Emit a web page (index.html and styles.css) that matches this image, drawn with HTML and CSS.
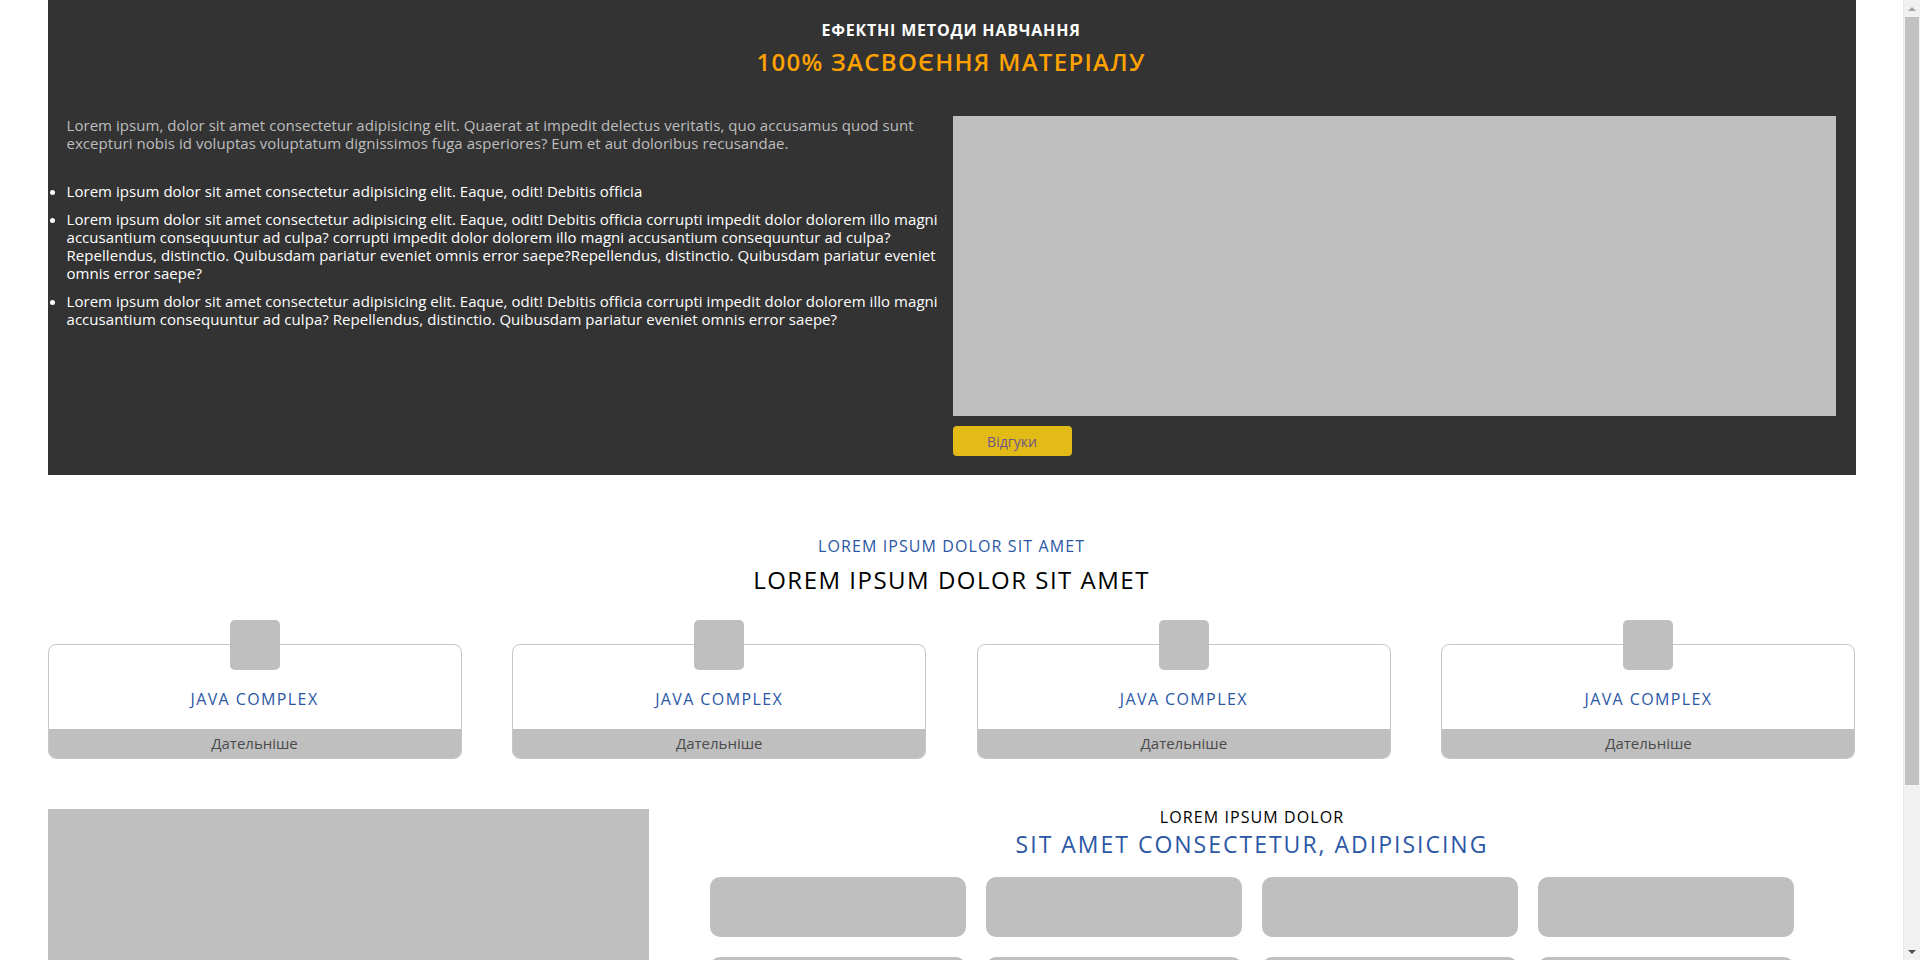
FILE: index.html
```html
<!DOCTYPE html>
<html lang="uk">
<head>
<meta charset="utf-8">
<title>Ефектні методи навчання</title>
<link rel="stylesheet" href="styles.css">
</head>
<body>
<div class="page">
  <section class="hero">
    <h2 class="hero-kicker">ЕФЕКТНІ МЕТОДИ НАВЧАННЯ</h2>
    <h1 class="hero-title">100% ЗАСВОЄННЯ МАТЕРІАЛУ</h1>
    <div class="hero-body">
      <div class="hero-text">
        <p class="hero-lead">Lorem ipsum, dolor sit amet consectetur adipisicing elit. Quaerat at impedit delectus veritatis, quo accusamus quod sunt excepturi nobis id voluptas voluptatum dignissimos fuga asperiores? Eum et aut doloribus recusandae.</p>
        <ul class="hero-list">
          <li>Lorem ipsum dolor sit amet consectetur adipisicing elit. Eaque, odit! Debitis officia</li>
          <li>Lorem ipsum dolor sit amet consectetur adipisicing elit. Eaque, odit! Debitis officia corrupti impedit dolor dolorem illo magni accusantium consequuntur ad culpa? corrupti impedit dolor dolorem illo magni accusantium consequuntur ad culpa? Repellendus, distinctio. Quibusdam pariatur eveniet omnis error saepe?Repellendus, distinctio. Quibusdam pariatur eveniet omnis error saepe?</li>
          <li>Lorem ipsum dolor sit amet consectetur adipisicing elit. Eaque, odit! Debitis officia corrupti impedit dolor dolorem illo magni accusantium consequuntur ad culpa? Repellendus, distinctio. Quibusdam pariatur eveniet omnis error saepe?</li>
        </ul>
      </div>
      <div class="hero-media">
        <div class="video"></div>
        <button class="btn-reviews" type="button">Відгуки</button>
      </div>
    </div>
  </section>

  <section class="courses">
    <h3 class="courses-kicker">LOREM IPSUM DOLOR SIT AMET</h3>
    <h2 class="courses-title">LOREM IPSUM DOLOR SIT AMET</h2>
    <div class="course-grid">
      <div class="course-card">
        <div class="course-icon"></div>
        <div class="course-name">JAVA COMPLEX</div>
        <div class="course-more">Дательніше</div>
      </div>
      <div class="course-card">
        <div class="course-icon"></div>
        <div class="course-name">JAVA COMPLEX</div>
        <div class="course-more">Дательніше</div>
      </div>
      <div class="course-card">
        <div class="course-icon"></div>
        <div class="course-name">JAVA COMPLEX</div>
        <div class="course-more">Дательніше</div>
      </div>
      <div class="course-card">
        <div class="course-icon"></div>
        <div class="course-name">JAVA COMPLEX</div>
        <div class="course-more">Дательніше</div>
      </div>
    </div>
  </section>

  <section class="features">
    <div class="features-media"></div>
    <div class="features-content">
      <h3 class="features-kicker">LOREM IPSUM DOLOR</h3>
      <h2 class="features-title">SIT AMET CONSECTETUR, ADIPISICING</h2>
      <div class="tile-grid">
        <div class="tile"></div>
        <div class="tile"></div>
        <div class="tile"></div>
        <div class="tile"></div>
        <div class="tile"></div>
        <div class="tile"></div>
        <div class="tile"></div>
        <div class="tile"></div>
      </div>
    </div>
  </section>
</div>
<div class="scrollbar" aria-hidden="true">
  <div class="sb-arrow sb-up"></div>
  <div class="sb-track"><div class="sb-thumb"></div></div>
  <div class="sb-arrow sb-down"></div>
</div>
</body>
</html>
```
FILE: styles.css
```css
* { box-sizing: border-box; }
html, body { margin: 0; padding: 0; }
body {
  font-family: "Open Sans", "Liberation Sans", sans-serif;
  background: #fff;
  color: #000;
  padding-right: 17px;
}
.page {
  width: 1808px;
  margin: 0 auto;
}

/* HERO */
.hero {
  background: #333333;
  padding: 20px 20px 19px 19px;
}
.hero-kicker {
  margin: 0;
  text-align: center;
  color: #fff;
  font-size: 16px;
  line-height: 20px;
  font-weight: 700;
  letter-spacing: 0.8px;
}
.hero-title {
  margin: 7px 0 39px;
  text-align: center;
  color: #ffa200;
  font-size: 24px;
  line-height: 30px;
  font-weight: 600;
  letter-spacing: 1.3px;
}
.hero-body {
  display: grid;
  grid-template-columns: 1fr 883px;
  column-gap: 8px;
}
.hero-text {
  font-size: 15px;
  line-height: 18px;
  letter-spacing: 0.05px;
}
.hero-lead {
  margin: 0 0 30px;
  color: #bdbdbd;
  padding-right: 24px;
}
.hero-list {
  margin: 0;
  padding: 0;
  color: #fff;
}
.hero-list li { margin-bottom: 10px; }
.hero-list li:last-child { margin-bottom: 0; }
.video {
  height: 300px;
  background: #bfbfbf;
}
.btn-reviews {
  display: block;
  margin-top: 10px;
  width: 119px;
  height: 30px;
  border: 0;
  border-radius: 4px;
  background: #e2bb17;
  color: #70558d;
  font-family: inherit;
  font-size: 14px;
  padding: 0;
}

/* COURSES */
.courses { padding-top: 61px; }
.courses-kicker {
  margin: 0;
  text-align: center;
  color: #2b57a5;
  font-size: 16px;
  line-height: 20px;
  font-weight: 500;
  letter-spacing: 1.1px;
}
.courses-title {
  margin: 9px 0 0;
  text-align: center;
  font-size: 24px;
  line-height: 30px;
  font-weight: 500;
  letter-spacing: 1.5px;
}
.course-grid {
  display: grid;
  grid-template-columns: repeat(4, 414px);
  justify-content: space-between;
  padding-top: 49px;
}
.course-card {
  border: 1px solid #c6c6c6;
  border-radius: 8px;
  text-align: center;
}
.course-icon {
  width: 50px;
  height: 50px;
  margin: -25px auto 0;
  background: #bfbfbf;
  border-radius: 5px;
}
.course-name {
  margin-top: 19px;
  color: #2b57a5;
  font-size: 16px;
  line-height: 20px;
  font-weight: 500;
  letter-spacing: 1.4px;
}
.course-more {
  margin-top: 20px;
  height: 29px;
  line-height: 29px;
  background: #bfbfbf;
  color: #4a4a4a;
  font-size: 15px;
  border-radius: 0 0 7px 7px;
}

/* FEATURES */
.features {
  margin-top: 50px;
  display: grid;
  grid-template-columns: 601px 1fr;
}
.features-media {
  height: 348px;
  background: #bfbfbf;
}
.features-content { text-align: center; }
.features-kicker {
  margin: 0;
  font-size: 16px;
  line-height: 20px;
  font-weight: 500;
  letter-spacing: 1.1px;
  margin-top: -2px;
}
.features-title {
  margin: 0;
  color: #2b57a5;
  font-size: 23px;
  line-height: 34px;
  font-weight: 500;
  letter-spacing: 2px;
}
.tile-grid {
  display: grid;
  grid-template-columns: repeat(4, 256px);
  gap: 20px 20px;
  justify-content: center;
  margin-top: 16px;
}
.tile {
  height: 60px;
  background: #bfbfbf;
  border-radius: 10px;
}

/* Browser scrollbar look-alike (the reference shows a vertical scrollbar) */
.scrollbar {
  position: fixed;
  top: 0;
  right: 0;
  width: 17px;
  height: 100vh;
  background: #f1f1f1;
  display: flex;
  flex-direction: column;
  border-left: 1px solid #e8e8e8;
}
.sb-arrow {
  height: 17px;
  display: flex;
  align-items: center;
  justify-content: center;
}
.sb-up::before,
.sb-down::before {
  content: "";
  border-left: 4px solid transparent;
  border-right: 4px solid transparent;
}
.sb-up::before { border-bottom: 4px solid #a3a3a3; }
.sb-down::before { border-top: 4px solid #505050; }
.sb-track {
  flex: 1;
  padding: 0 1px;
}
.sb-thumb {
  height: 768px;
  background: #c1c1c1;
}
```
